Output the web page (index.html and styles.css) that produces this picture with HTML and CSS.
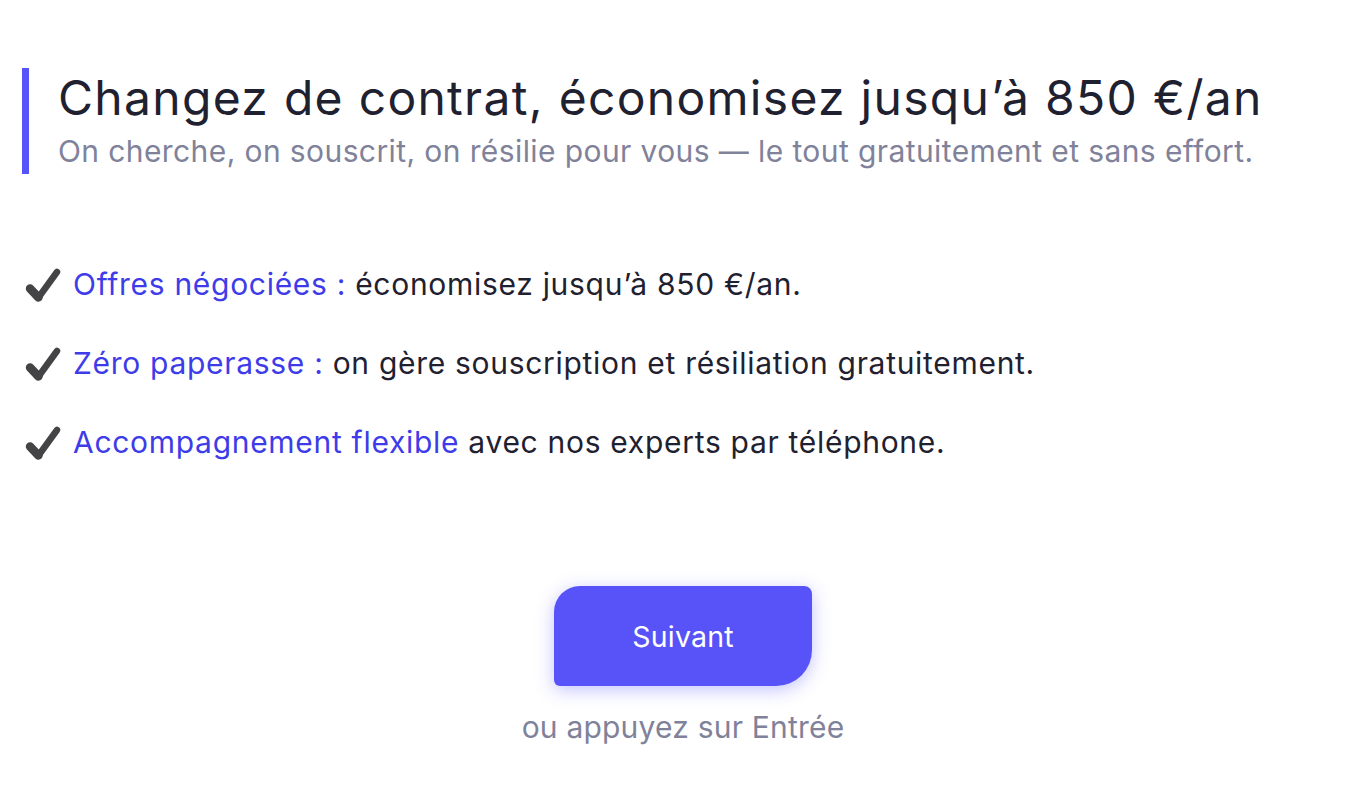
FILE: index.html
```html
<!DOCTYPE html>
<html lang="fr">
<head>
<meta charset="utf-8">
<link rel="stylesheet" href="styles.css">
</head>
<body>
<main class="page">
  <header class="hero">
    <h1 class="title">Changez de contrat, économisez jusqu’à 850 €/an</h1>
    <p class="subtitle">On cherche, on souscrit, on résilie pour vous — le tout gratuitement et sans effort.</p>
  </header>
  <ul class="features">
    <li class="feature">
      <svg class="check" viewBox="0 0 36 34" aria-hidden="true"><path d="M5 20.5 L13.5 29.5" stroke="#444446" stroke-width="8.5" stroke-linecap="round" fill="none"/><path d="M13.5 29.5 L32 4" stroke="#444446" stroke-width="6.5" stroke-linecap="round" fill="none"/></svg>
      <span class="text"><span class="hl">Offres négociées :</span> économisez jusqu’à 850 €/an.</span>
    </li>
    <li class="feature">
      <svg class="check" viewBox="0 0 36 34" aria-hidden="true"><path d="M5 20.5 L13.5 29.5" stroke="#444446" stroke-width="8.5" stroke-linecap="round" fill="none"/><path d="M13.5 29.5 L32 4" stroke="#444446" stroke-width="6.5" stroke-linecap="round" fill="none"/></svg>
      <span class="text"><span class="hl">Zéro paperasse :</span> on gère souscription et résiliation gratuitement.</span>
    </li>
    <li class="feature">
      <svg class="check" viewBox="0 0 36 34" aria-hidden="true"><path d="M5 20.5 L13.5 29.5" stroke="#444446" stroke-width="8.5" stroke-linecap="round" fill="none"/><path d="M13.5 29.5 L32 4" stroke="#444446" stroke-width="6.5" stroke-linecap="round" fill="none"/></svg>
      <span class="text"><span class="hl">Accompagnement flexible</span> avec nos experts par téléphone.</span>
    </li>
  </ul>
  <div class="actions">
    <button class="next">Suivant</button>
    <p class="hint">ou appuyez sur Entrée</p>
  </div>
</main>
</body>
</html>
```
FILE: styles.css
```css
* { box-sizing: border-box; }
html, body { margin: 0; padding: 0; background: #fff; }
body { font-family: Inter, "Noto Sans", sans-serif; color: #1f2130; }
.page { padding: 68px 22px 0 22px; display: flex; flex-direction: column; }
.hero { border-left: 7px solid #5653f7; padding-left: 29px; display: flex; flex-direction: column; }
.title { margin: 0; font-weight: 400; font-size: 48px; letter-spacing: 1.3px; line-height: 60px; color: #1f2130; }
.subtitle { margin: 0; font-size: 30px; letter-spacing: 0.4px; line-height: 46px; color: #80829a; }
.features { list-style: none; margin: 91px 0 0 0; padding: 0 0 0 3px; display: flex; flex-direction: column; gap: 40px; }
.feature { display: flex; align-items: center; gap: 12px; font-size: 30px; letter-spacing: 0.7px; line-height: 39px; color: #1f2130; }
.check { width: 36px; height: 34px; flex: none; }
.hl { color: #3e3ce9; }
.actions { display: flex; flex-direction: column; align-items: center; margin-top: 124px; }
.next { width: 258px; height: 100px; border: none; background: #5753f8; color: #fff; font-family: inherit; font-size: 28.5px; letter-spacing: 0.2px; border-radius: 26px 8px 36px 6px; box-shadow: 0 4px 18px rgba(87, 83, 248, 0.35); cursor: pointer; }
.hint { margin: 21px 0 0 0; font-size: 30px; letter-spacing: 0.2px; line-height: 40px; color: #80829a; }
```
